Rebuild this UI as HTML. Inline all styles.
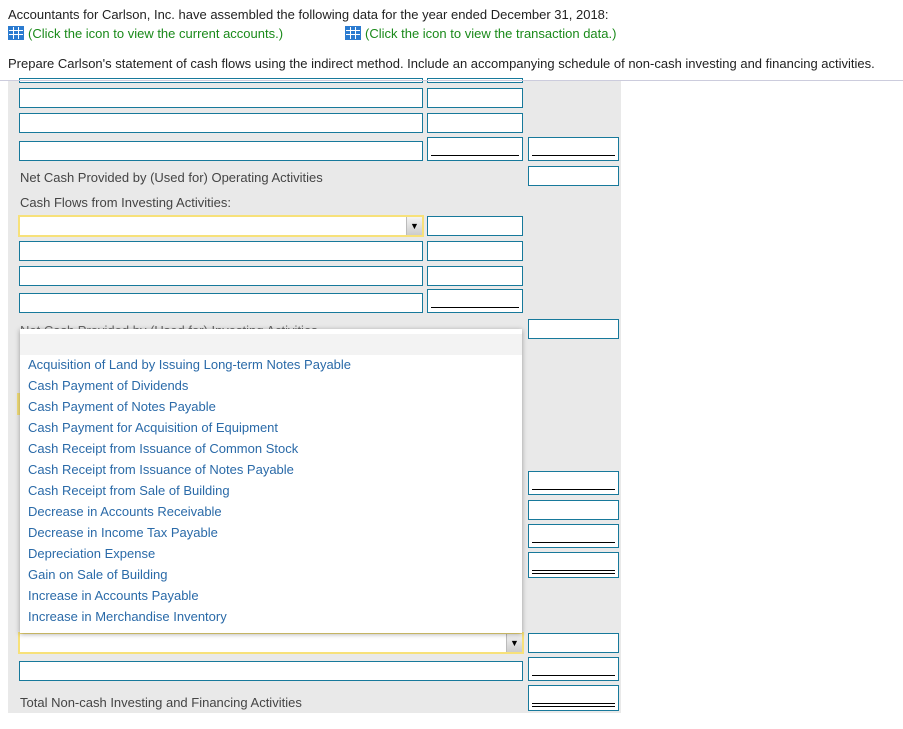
<!DOCTYPE html>
<html><head><style>
*{margin:0;padding:0;box-sizing:border-box}
body{width:903px;height:729px;background:#fff;font-family:"Liberation Sans",Arial,sans-serif;position:relative;overflow:hidden}
.a{position:absolute}
.t{font-size:13px;color:#222}
.g{color:#1a8a1a;font-size:13px}
.b{position:absolute;background:#fff;border:1.5px solid #17799b}
.b .u{position:absolute;left:3px;right:3px;bottom:4px;height:1px;background:#000}
.b .d{position:absolute;left:3px;right:3px;bottom:3px;height:4px;border-top:1px solid #000;border-bottom:1px solid #000}
.s{position:absolute;background:#fff;border:2px solid #f7e17a}
.arr{position:absolute;right:0;top:0;bottom:0;width:16px;background:linear-gradient(#f4f4f4,#ccc);border-left:1px solid #bbb;font-size:9px;text-align:center;line-height:18px;color:#000}
.lab{position:absolute;left:20px;font-size:13px;color:#444}
.ic{display:inline-block;width:16px;height:14px;vertical-align:-2px;margin-right:4px;background:#2b7bd0;border:1px solid #2b7bd0;background-image:linear-gradient(90deg,transparent 4px,#fff 4px,#fff 5px,transparent 5px,transparent 9px,#fff 9px,#fff 10px,transparent 10px),linear-gradient(transparent 3px,#fff 3px,#fff 4px,transparent 4px,transparent 7px,#fff 7px,#fff 8px,transparent 8px)}
.dd{position:absolute;left:20px;top:329px;width:502px;height:304px;background:#fff;box-shadow:0 1px 5px rgba(0,0,0,.35)}
.dd div{position:absolute;left:8px;font-size:13px;color:#2a6aa8}
</style></head><body>
<div class="a t" style="left:8px;top:7px">Accountants for Carlson, Inc. have assembled the following data for the year ended December 31, 2018:</div>
<div class="a g" style="left:8px;top:26px"><span class="ic"></span>(Click the icon to view the current accounts.)</div>
<div class="a g" style="left:345px;top:26px"><span class="ic"></span>(Click the icon to view the transaction data.)</div>
<div class="a t" style="left:8px;top:56px">Prepare Carlson's statement of cash flows using the indirect method. Include an accompanying schedule of non-cash investing and financing activities.</div>
<div class="a" style="left:8px;top:81px;width:613px;height:632px;background:#e9e9e9"></div>

<div class="b" style="left:19px;top:78px;width:404px;height:5px"></div>
<div class="b" style="left:427px;top:78px;width:96px;height:5px"></div>
<div class="a" style="left:0;top:80px;width:903px;height:1px;background:#ccd"></div>
<div class="b" style="left:19px;top:88px;width:404px;height:20px"></div>
<div class="b" style="left:427px;top:88px;width:96px;height:20px"></div>
<div class="b" style="left:19px;top:113px;width:404px;height:20px"></div>
<div class="b" style="left:427px;top:113px;width:96px;height:20px"></div>
<div class="b" style="left:19px;top:141px;width:404px;height:20px"></div>
<div class="b" style="left:427px;top:137px;width:96px;height:24px"><div class="u"></div></div>
<div class="b" style="left:528px;top:137px;width:91px;height:24px"><div class="u"></div></div>
<div class="lab" style="top:170px">Net Cash Provided by (Used for) Operating Activities</div>
<div class="b" style="left:528px;top:166px;width:91px;height:20px"></div>
<div class="lab" style="top:195px">Cash Flows from Investing Activities:</div>
<div class="s" style="left:18px;top:215px;width:406px;height:22px"><div class="arr">▼</div></div>
<div class="b" style="left:427px;top:216px;width:96px;height:20px"></div>
<div class="b" style="left:19px;top:241px;width:404px;height:20px"></div>
<div class="b" style="left:427px;top:241px;width:96px;height:20px"></div>
<div class="b" style="left:19px;top:266px;width:404px;height:20px"></div>
<div class="b" style="left:427px;top:266px;width:96px;height:20px"></div>
<div class="b" style="left:19px;top:293px;width:404px;height:20px"></div>
<div class="b" style="left:427px;top:289px;width:96px;height:24px"><div class="u"></div></div>
<div class="lab" style="top:323px;color:#666">Net Cash Provided by (Used for) Investing Activities</div>
<div class="b" style="left:528px;top:319px;width:91px;height:20px"></div>
<div class="a" style="left:17px;top:393px;width:3px;height:22px;background:#f5e07a"></div>
<div class="b" style="left:528px;top:471px;width:91px;height:24px"><div class="u"></div></div>
<div class="b" style="left:528px;top:500px;width:91px;height:20px"></div>
<div class="b" style="left:528px;top:524px;width:91px;height:24px"><div class="u"></div></div>
<div class="b" style="left:528px;top:552px;width:91px;height:26px"><div class="d"></div></div>
<div class="s" style="left:18px;top:632px;width:506px;height:22px"><div class="arr">▼</div></div>
<div class="b" style="left:528px;top:633px;width:91px;height:20px"></div>
<div class="b" style="left:19px;top:661px;width:504px;height:20px"></div>
<div class="b" style="left:528px;top:657px;width:91px;height:24px"><div class="u"></div></div>
<div class="lab" style="top:695px">Total Non-cash Investing and Financing Activities</div>
<div class="b" style="left:528px;top:685px;width:91px;height:26px"><div class="d"></div></div>

<div class="dd">
<div style="left:0;top:5px;width:502px;height:21px;background:#f3f3f3"></div>
<div style="top:28px">Acquisition of Land by Issuing Long-term Notes Payable</div>
<div style="top:49px">Cash Payment of Dividends</div>
<div style="top:70px">Cash Payment of Notes Payable</div>
<div style="top:91px">Cash Payment for Acquisition of Equipment</div>
<div style="top:112px">Cash Receipt from Issuance of Common Stock</div>
<div style="top:133px">Cash Receipt from Issuance of Notes Payable</div>
<div style="top:154px">Cash Receipt from Sale of Building</div>
<div style="top:175px">Decrease in Accounts Receivable</div>
<div style="top:196px">Decrease in Income Tax Payable</div>
<div style="top:217px">Depreciation Expense</div>
<div style="top:238px">Gain on Sale of Building</div>
<div style="top:259px">Increase in Accounts Payable</div>
<div style="top:280px">Increase in Merchandise Inventory</div>
</div>
</body></html>
